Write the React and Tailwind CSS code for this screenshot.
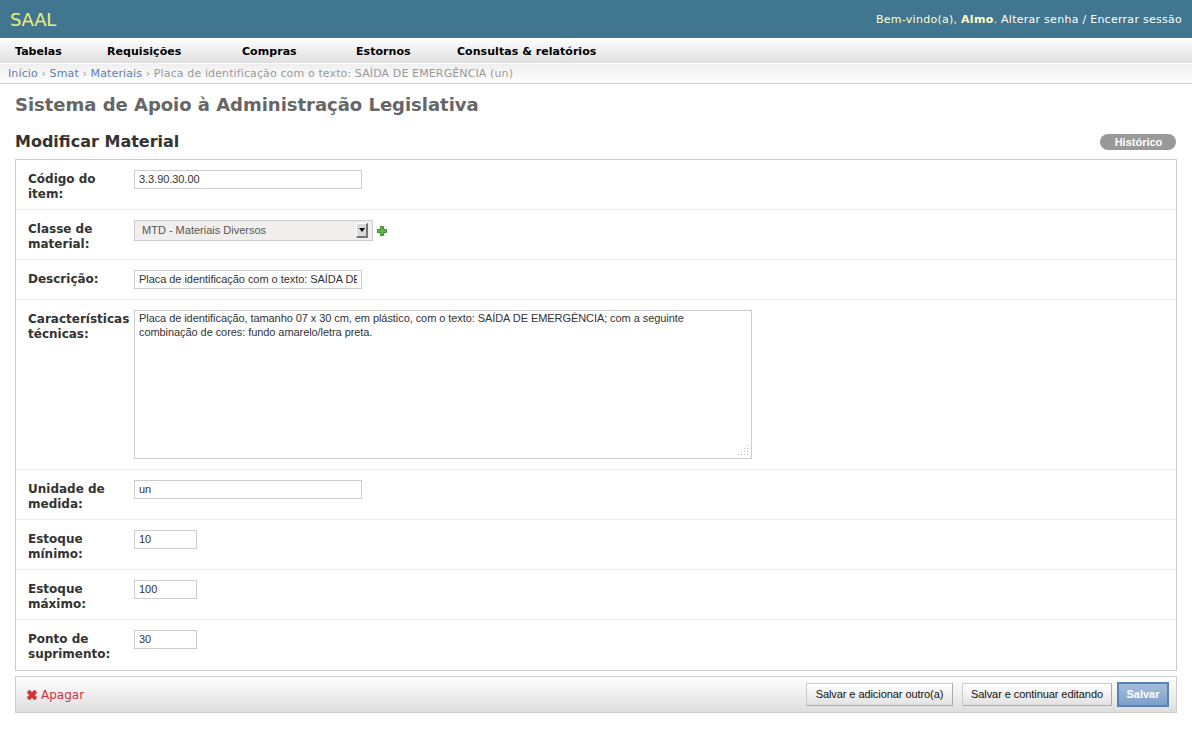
const sans = "font-['DejaVu_Sans',sans-serif]";
const arial = "font-['Liberation_Sans',sans-serif]";

const menu = [
	{label: "Tabelas", cls: "w-[92px]"},
	{label: "Requisições", cls: "w-[135px]"},
	{label: "Compras", cls: "w-[114px]"},
	{label: "Estornos", cls: "w-[101px]"},
	{label: "Consultas & relatórios", cls: ""},
];

const inputCls = `h-[19px] border border-[#ccc] bg-white px-1 pb-[2px] text-[11px] tracking-[-0.05px] text-[#333] outline-none ${arial}`;

// pontos do canto de redimensionar do textarea
const grip = [[9,0],[6,3],[9,3],[3,6],[6,6],[9,6],[0,9],[3,9],[6,9],[9,9]];

function Label({children}) {
	return <label className="w-[106px] shrink-0 pt-[2px] text-[12px] leading-[15px] font-bold text-[#333]">{children}</label>;
}

function Row({label,children,last,className = ""}) {
	return (
		<div className={`flex items-start px-3 pt-[10px] ${last ? "" : "border-b border-[#eee]"} ${className}`}>
			<Label>{label}</Label>
			{children}
		</div>
	);
}

function PlusIcon() {
	return (
		<svg width="10" height="10" viewBox="0 0 10 10" className="mt-[6px] ml-1">
			<path d="M3.5.5h3v3h3v3h-3v3h-3v-3h-3v-3h3z" fill="#5fb548" stroke="#3f8a2e" />
		</svg>
	);
}

function DeleteIcon() {
	return (
		<svg width="10" height="10" viewBox="0 0 10 10" className="mr-1">
			<path d="M2.5 0 5 2.5 7.5 0 10 2.5 7.5 5 10 7.5 7.5 10 5 7.5 2.5 10 0 7.5 2.5 5 0 2.5z" fill="#d8303a" stroke="#a82028" strokeWidth=".5" />
		</svg>
	);
}

function SaveButton({children,className}) {
	return (
		<button type="button" className={`h-[23px] border border-[#ccc] border-r-[#aaa] border-b-[#aaa] bg-[linear-gradient(#fff,#e2e2e2)] text-[11px] tracking-[-0.07px] text-[#111] ${arial} ${className}`}>
			{children}
		</button>
	);
}

export default function App() {
	return (
		<div className={`min-h-[733px] bg-white ${sans}`}>
			<header className="flex h-[38px] items-center justify-between bg-[#417690] px-[10px]">
				<span className="text-[18px] tracking-[-0.2px] text-[#f0ee7a]">SAAL</span>
				<span className="pt-[2px] text-[11px] tracking-[0.27px] text-[#ffc]">
					Bem-vindo(a), <strong>Almo</strong>. <span className="text-white">Alterar senha / Encerrar sessão</span>
				</span>
			</header>
			<nav className="flex h-[25px] items-center bg-[linear-gradient(#fff,#dedede)] pt-[1px] pl-[15px] text-[11px] font-bold tracking-[0.05px] text-black">
				{menu.map(item => (
					<a key={item.label} className={`pt-[3px] ${item.cls}`}>{item.label}</a>
				))}
			</nav>
			<div className="h-[21px] border-t border-b border-t-white border-b-[#ccc] bg-[linear-gradient(#efefef,#fff)] pt-[1px] pl-2 text-[11px] leading-[18px] tracking-[0.12px] text-[#999]">
				<a className="text-[#5b80b2]">Início</a> › <a className="text-[#5b80b2]">Smat</a> › <a className="text-[#5b80b2]">Materiais</a> › Placa de identificação com o texto: SAÍDA DE EMERGÊNCIA (un)
			</div>
			<main className="px-[15px]">
				<h1 className="mt-[10px] text-[18px] leading-[22px] font-bold tracking-[-0.02px] text-[#666]">Sistema de Apoio à Administração Legislativa</h1>
				<div className="mt-[15px] flex items-center justify-between">
					<h2 className="text-[16px] leading-[22px] font-bold text-[#333]">Modificar Material</h2>
					<a className={`mr-[1px] flex h-[16px] w-[76px] items-center justify-center rounded-full bg-[#999] pl-[1px] text-[11px] font-bold text-white ${arial}`}>Histórico</a>
				</div>
				<div className="mt-[6px] border border-[#ccc]">
					<Row label="Código do item:" className="h-[50px]">
						<input readOnly value="3.3.90.30.00" className={`w-[228px] ${inputCls}`} />
					</Row>
					<Row label="Classe de material:" className="h-[50px]">
						<div className={`flex h-[21px] w-[239px] items-center justify-between border border-[#ccc] bg-[#f0efed] pr-[4px] pl-[7px] text-[11px] text-[#555] ${arial}`}>
							<span>MTD - Materiais Diversos</span>
							<span className="flex h-[15px] w-[12px] items-center justify-center border-t border-r-[2px] border-b-[2px] border-l border-t-white border-r-[#777] border-b-[#777] border-l-white bg-[#dcdad5]">
								<span className="border-x-[3px] border-t-[4px] border-x-transparent border-t-black" />
							</span>
						</div>
						<PlusIcon />
					</Row>
					<Row label="Descrição:" className="h-[40px]">
						<input readOnly value="Placa de identificação com o texto: SAÍDA DE EMERGÊNCIA" className={`w-[228px] ${inputCls}`} />
					</Row>
					<Row label="Características técnicas:" className="h-[170px]">
						<div className="relative flex">
							<textarea
								readOnly
								value={"Placa de identificação, tamanho 07 x 30 cm, em plástico, com o texto: SAÍDA DE EMERGÊNCIA; com a seguinte combinação de cores: fundo amarelo/letra preta."}
								className={`h-[149px] w-[618px] resize-none border border-[#ccc] bg-white pr-[16px] pl-1 text-[11px] leading-[14px] tracking-[-0.07px] text-[#333] outline-none ${arial}`}
							/>
							<svg width="10" height="10" viewBox="0 0 10 10" className="absolute right-[4px] bottom-[4px]">
								{grip.map(([x,y]) => <rect key={`${x}-${y}`} x={x} y={y} width="1" height="1" fill="#bbb" />)}
							</svg>
						</div>
					</Row>
					<Row label="Unidade de medida:" className="h-[50px]">
						<input readOnly value="un" className={`w-[228px] ${inputCls}`} />
					</Row>
					<Row label="Estoque mínimo:" className="h-[50px]">
						<input readOnly value="10" className={`w-[63px] ${inputCls}`} />
					</Row>
					<Row label="Estoque máximo:" className="h-[50px]">
						<input readOnly value="100" className={`w-[63px] ${inputCls}`} />
					</Row>
					<Row label="Ponto de suprimento:" last className="h-[50px]">
						<input readOnly value="30" className={`w-[63px] ${inputCls}`} />
					</Row>
				</div>
				<div className="mt-[5px] flex h-[37px] items-center justify-between border border-[#ccc] bg-[linear-gradient(#fff,#dedede)] pr-[7px] pl-[11px]">
					<a className="flex items-center text-[12px] text-[#d62f3a]"><DeleteIcon />Apagar</a>
					<div className="flex items-center">
						<SaveButton className="mr-[9px] w-[147px]">Salvar e adicionar outro(a)</SaveButton>
						<SaveButton className="mr-[5px] w-[150px]">Salvar e continuar editando</SaveButton>
						<button type="button" className={`h-[25px] w-[52px] border-2 border-[#5b80b2] bg-[linear-gradient(#a5bfdd,#7d9fc9)] text-[11px] font-bold text-white ${arial}`}>Salvar</button>
					</div>
				</div>
			</main>
		</div>
	);
}
